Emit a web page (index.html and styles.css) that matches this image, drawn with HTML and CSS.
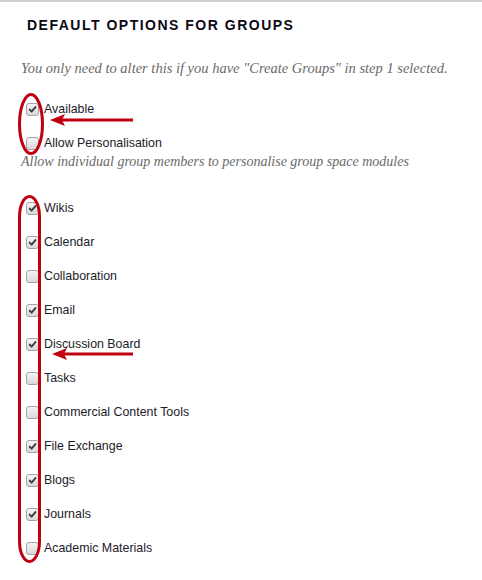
FILE: index.html
```html
<!DOCTYPE html>
<html lang="en">
<head>
<meta charset="utf-8">
<title>Default Options for Groups</title>
<link rel="stylesheet" href="styles.css">
</head>
<body>
<div class="page">
  <div class="panel">
    <h2 class="title">DEFAULT OPTIONS FOR GROUPS</h2>
    <p class="note">You only need to alter this if you have "Create Groups" in step 1 selected.</p>

    <div class="group">
      <label class="opt"><span class="box on"><svg viewBox="0 0 13 13"><path d="M3.2 6.6 L5.4 9 L10 3.6" /></svg></span>Available</label>
      <div class="opt-with-desc">
        <label class="opt"><span class="box"></span>Allow Personalisation</label>
        <p class="desc">Allow individual group members to personalise group space modules</p>
      </div>
    </div>

    <div class="group tools">
      <label class="opt"><span class="box on"><svg viewBox="0 0 13 13"><path d="M3.2 6.6 L5.4 9 L10 3.6" /></svg></span>Wikis</label>
      <label class="opt"><span class="box on"><svg viewBox="0 0 13 13"><path d="M3.2 6.6 L5.4 9 L10 3.6" /></svg></span>Calendar</label>
      <label class="opt"><span class="box"></span>Collaboration</label>
      <label class="opt"><span class="box on"><svg viewBox="0 0 13 13"><path d="M3.2 6.6 L5.4 9 L10 3.6" /></svg></span>Email</label>
      <label class="opt"><span class="box on"><svg viewBox="0 0 13 13"><path d="M3.2 6.6 L5.4 9 L10 3.6" /></svg></span>Discussion Board</label>
      <label class="opt"><span class="box"></span>Tasks</label>
      <label class="opt"><span class="box"></span>Commercial Content Tools</label>
      <label class="opt"><span class="box on"><svg viewBox="0 0 13 13"><path d="M3.2 6.6 L5.4 9 L10 3.6" /></svg></span>File Exchange</label>
      <label class="opt"><span class="box on"><svg viewBox="0 0 13 13"><path d="M3.2 6.6 L5.4 9 L10 3.6" /></svg></span>Blogs</label>
      <label class="opt"><span class="box on"><svg viewBox="0 0 13 13"><path d="M3.2 6.6 L5.4 9 L10 3.6" /></svg></span>Journals</label>
      <label class="opt"><span class="box"></span>Academic Materials</label>
    </div>
  </div>

  <svg class="annot" viewBox="0 0 482 580" width="482" height="580">
    <ellipse cx="31" cy="124" rx="11.5" ry="29.5" />
    <rect x="19.5" y="196.5" width="20" height="365" rx="10" ry="20" />
    <line x1="61" y1="120" x2="133" y2="120" />
    <polygon points="50,120 65,114 62,120 65,126" />
    <line x1="63" y1="354" x2="133" y2="354" />
    <polygon points="52,354 67,348 64,354 67,360" />
  </svg>
</div>
</body>
</html>
```

FILE: styles.css
```css
html, body {
  margin: 0;
  padding: 0;
  background: #ffffff;
}

.page {
  position: relative;
  width: 482px;
  height: 580px;
  border-top: 2px solid #cfcfcf;
  box-sizing: border-box;
  overflow: hidden;
}

.panel {
  padding: 0 0 0 21px;
}

.title {
  margin: 16px 0 0 6px;
  font-family: "Liberation Sans", Arial, sans-serif;
  font-weight: bold;
  font-size: 14px;
  line-height: 14px;
  letter-spacing: 1.5px;
  color: #0a0a14;
}

.note {
  margin: 27px 0 0 0;
  font-family: "Liberation Serif", "Times New Roman", serif;
  font-style: italic;
  font-size: 14.5px;
  line-height: 18px;
  color: #6a6a6a;
}

.group {
  display: flex;
  flex-direction: column;
  gap: 14px;
  margin-top: 22px;
}

.tools {
  margin-top: 27px;
}

.opt {
  display: flex;
  align-items: center;
  gap: 5px;
  height: 20px;
  padding-left: 5px;
  font-family: "Liberation Sans", Arial, sans-serif;
  font-size: 12.4px;
  color: #1c1c28;
}

.box {
  display: block;
  box-sizing: border-box;
  width: 13px;
  height: 13px;
  border: 1px solid #a4a4a4;
  border-radius: 3px;
  background: linear-gradient(#f4f4f4, #d9d9d9);
  flex: none;
}

.box svg {
  display: block;
  width: 11px;
  height: 11px;
}

.box svg path {
  fill: none;
  stroke: #3a3a3a;
  stroke-width: 2.2;
  stroke-linecap: round;
  stroke-linejoin: round;
}

.desc {
  margin: 0;
  font-family: "Liberation Serif", "Times New Roman", serif;
  font-style: italic;
  font-size: 14px;
  line-height: 18px;
  color: #6a6a6a;
}

.annot {
  position: absolute;
  left: 0;
  top: -2px;
  pointer-events: none;
}

.annot ellipse,
.annot rect {
  fill: none;
  stroke: #c00010;
  stroke-width: 3;
}

.annot line {
  stroke: #c00010;
  stroke-width: 3;
}

.annot polygon {
  fill: #c00010;
}
```
